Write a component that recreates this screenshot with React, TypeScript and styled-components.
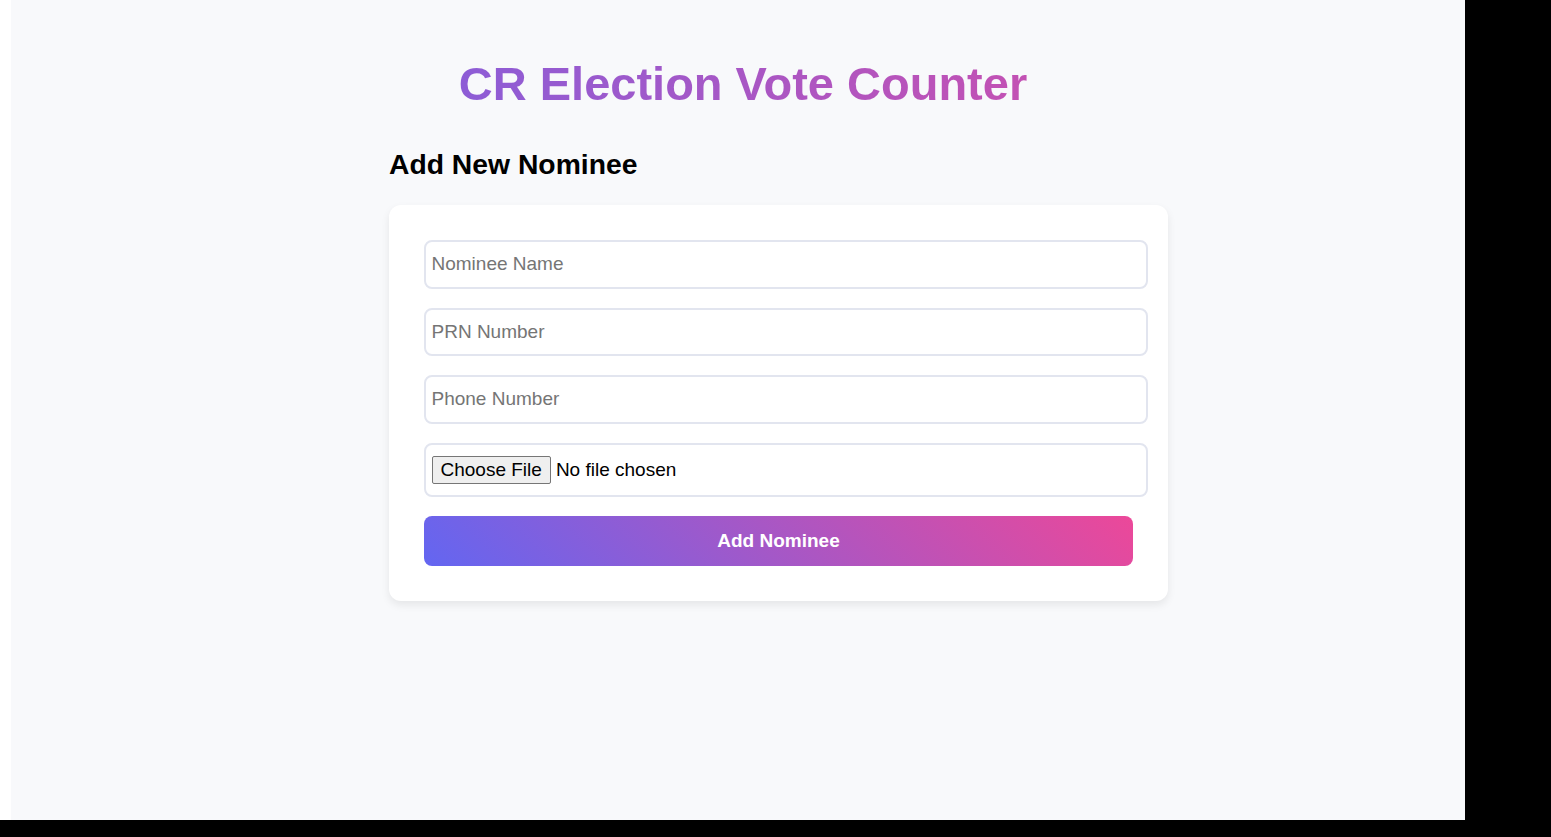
import React from "react";
import styled, { createGlobalStyle } from "styled-components";

const Global = createGlobalStyle`
  html, body { margin: 0; padding: 0; background: #000; }
  body { font-family: "Liberation Sans", Arial, sans-serif; }
  * { box-sizing: border-box; }
`;

const Screen = styled.div`
  width: 1465px;
  height: 820px;
  display: flex;
  background: #ffffff;
`;

const Page = styled.main`
  flex: 1;
  margin-left: 11px;
  background: #f8f9fb;
  display: flex;
  flex-direction: column;
`;

const Title = styled.h1`
  margin: 57px 0 0;
  padding-left: 10px;
  text-align: center;
  font-family: "Liberation Sans", Arial, sans-serif;
  font-weight: 700;
  font-size: 47px;
  line-height: 54px;
  background: linear-gradient(90deg, #6366f1, #ec4899);
  -webkit-background-clip: text;
  background-clip: text;
  color: transparent;
  align-self: stretch;
`;

const Section = styled.section`
  width: 779px;
  margin: 37px 0 0 378px;
  display: flex;
  flex-direction: column;
`;

const Heading = styled.h2`
  margin: 0 0 25px;
  font-family: "Liberation Sans", Arial, sans-serif;
  font-weight: 700;
  font-size: 28.3px;
  line-height: 32px;
  color: #000;
`;

const Card = styled.form`
  background: #fff;
  border-radius: 12px;
  padding: 35px;
  box-shadow: 0 4px 8px rgba(0, 0, 0, 0.08);
  display: flex;
  flex-direction: column;
  gap: 19px;
`;

const Field = styled.input`
  box-sizing: content-box;
  width: 100%;
  margin: 0;
  padding: 11.25px 5.5px;
  border: 2px solid #e2e5ef;
  border-radius: 8px;
  background: #fff;
  font-family: "Liberation Sans", Arial, sans-serif;
  font-size: 19px;
  line-height: 22px;
  height: 22px;
  color: #000;
  outline: none;
  &::placeholder { color: #757575; }
`;

const FileField = styled.input`
  box-sizing: content-box;
  width: 100%;
  margin: 0;
  padding: 11.25px 5.5px;
  border: 2px solid #e2e5ef;
  border-radius: 8px;
  background: #fff;
  font-family: "Liberation Sans", Arial, sans-serif;
  font-size: 19px;
  color: #000;
  &::file-selector-button {
    font-family: "Liberation Sans", Arial, sans-serif;
    font-size: 19px;
    padding: 2px 8px;
    margin-right: 5px;
    border: 1px solid #767676;
    border-radius: 2px;
    background: #efefef;
    color: #000;
  }
`;

const Submit = styled.button`
  height: 50px;
  margin-top: 0;
  border: none;
  border-radius: 8px;
  background: linear-gradient(45deg, #6366f1, #ec4899);
  color: #fff;
  font-family: "Liberation Sans", Arial, sans-serif;
  font-weight: 700;
  font-size: 19px;
  cursor: pointer;
`;

export default function App() {
  return (
    <>
      <Global />
      <Screen>
        <Page>
          <Title>CR Election Vote Counter</Title>
          <Section>
            <Heading>Add New Nominee</Heading>
            <Card onSubmit={(e) => e.preventDefault()}>
              <Field type="text" placeholder="Nominee Name" />
              <Field type="text" placeholder="PRN Number" />
              <Field type="text" placeholder="Phone Number" />
              <FileField type="file" />
              <Submit type="submit">Add Nominee</Submit>
            </Card>
          </Section>
        </Page>
      </Screen>
    </>
  );
}
